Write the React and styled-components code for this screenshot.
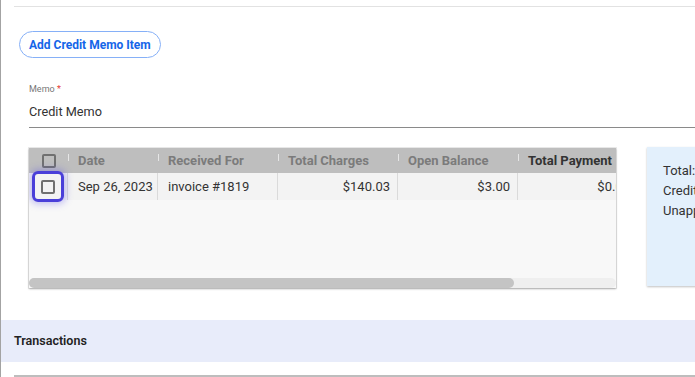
import React from "react";
import styled, { createGlobalStyle } from "styled-components";

const GlobalStyle = createGlobalStyle`
  body {
    margin: 0;
    background: #fff;
    font-family: Roboto, "Liberation Sans", sans-serif;
  }
`;

const columns = [
  { key: "date", label: "Date", width: 90 },
  { key: "receivedFor", label: "Received For", width: 120 },
  { key: "totalCharges", label: "Total Charges", width: 120, align: "right" },
  { key: "openBalance", label: "Open Balance", width: 120, align: "right" },
  { key: "totalPayment", label: "Total Payment", width: 120, align: "right", active: true },
];

const rows = [
  {
    id: 1,
    date: "Sep 26, 2023",
    receivedFor: "invoice #1819",
    totalCharges: "$140.03",
    openBalance: "$3.00",
    totalPayment: "$0.00",
  },
];

// visible part of the grid vs. full content width
const VIEW_WIDTH = 587;
const CONTENT_WIDTH = 711;

function App() {
  const thumbWidth = Math.round((VIEW_WIDTH / CONTENT_WIDTH) * VIEW_WIDTH);

  return (
    <>
      <GlobalStyle />
      <Page>
        <TopRule />
        <Toolbar>
          <OutlineButton>Add Credit Memo Item</OutlineButton>
        </Toolbar>

        <MemoField>
          <FieldLabel>
            Memo <Required>*</Required>
          </FieldLabel>
          <FieldValue>Credit Memo</FieldValue>
        </MemoField>

        <ContentRow>
          <Grid>
            <Viewport>
              <Inner>
                <HeaderRow>
                  <CheckCell>
                    <Checkbox />
                  </CheckCell>
                  {columns.map((col) => (
                    <HeadCell key={col.key} $w={col.width} $active={col.active}>
                      {col.label}
                    </HeadCell>
                  ))}
                  <Filler />
                </HeaderRow>
                {rows.map((row) => (
                  <DataRow key={row.id}>
                    <CheckCell $bordered>
                      <FocusRing>
                        <Checkbox />
                      </FocusRing>
                    </CheckCell>
                    {columns.map((col) => (
                      <Cell key={col.key} $w={col.width} $align={col.align}>
                        {row[col.key]}
                      </Cell>
                    ))}
                    <Filler />
                  </DataRow>
                ))}
              </Inner>
            </Viewport>
            <ScrollTrack>
              <ScrollThumb style={{ width: thumbWidth }} />
            </ScrollTrack>
          </Grid>

          <Summary>
            <SummaryLine>Total:</SummaryLine>
            <SummaryLine>Credit</SummaryLine>
            <SummaryLine>Unapplied</SummaryLine>
          </Summary>
        </ContentRow>

        <SectionBand>Transactions</SectionBand>
        <BottomRule />
      </Page>
    </>
  );
}

export default App;

const Page = styled.div`
  width: 695px;
  height: 377px;
  box-sizing: border-box;
  border-left: 1px solid #a3a3a3;
  overflow: hidden;
`;

const TopRule = styled.div`
  height: 1px;
  margin: 6px 0 0 13px;
  background: #e2e2e2;
`;

const Toolbar = styled.div`
  display: flex;
  padding: 24px 0 0 18px;
`;

const OutlineButton = styled.button`
  height: 27px;
  padding: 0 9px;
  border: 1px solid #86b0f7;
  border-radius: 14px;
  background: #fff;
  color: #1565e8;
  font-family: Roboto, "Liberation Sans", sans-serif;
  font-size: 12px;
  font-weight: 700;
  cursor: pointer;
`;

const MemoField = styled.div`
  margin: 26px 0 0 28px;
  border-bottom: 1px solid #8a8a8a;
`;

const FieldLabel = styled.div`
  height: 12px;
  font-size: 9px;
  line-height: 11px;
  color: #777;
`;

const Required = styled.span`
  color: #e53935;
`;

const FieldValue = styled.div`
  height: 31px;
  font-size: 12.7px;
  line-height: 32px;
  color: #333;
`;

const ContentRow = styled.div`
  display: flex;
  gap: 31px;
  margin-top: 20px;
  padding-left: 28px;
`;

const Grid = styled.div`
  flex: 0 0 ${VIEW_WIDTH}px;
  height: 140px;
  display: flex;
  flex-direction: column;
  background: #f8f8f8;
  box-shadow: 0 1px 2px rgba(0, 0, 0, 0.3), 0 0 0 1px #ececec;
  overflow: hidden;
`;

const Viewport = styled.div`
  flex: 1;
  overflow: hidden;
`;

const Inner = styled.div`
  width: ${CONTENT_WIDTH}px;
`;

const ScrollTrack = styled.div`
  flex: 0 0 10px;
  display: flex;
  background: #efefef;
  border-radius: 5px;
`;

const ScrollThumb = styled.div`
  height: 100%;
  background: #c4c4c4;
  border-radius: 5px;
`;

const HeaderRow = styled.div`
  display: flex;
  height: 25px;
  background: #bebebe;
`;

const DataRow = styled.div`
  display: flex;
  height: 27px;
  background: #f3f3f3;
`;

const CheckCell = styled.div`
  flex: 0 0 39px;
  display: flex;
  align-items: center;
  justify-content: center;
  box-sizing: border-box;
  border-right: ${(p) => (p.$bordered ? "1px solid #dadada" : "none")};
`;

const Checkbox = styled.span`
  display: block;
  width: 10px;
  height: 10px;
  border: 2px solid #707070;
  border-radius: 2px;
  background: transparent;
`;

const FocusRing = styled.span`
  display: flex;
  align-items: center;
  justify-content: center;
  width: 26px;
  height: 25px;
  border: 3px solid #4a3fd9;
  border-radius: 6px;
  box-shadow: 0 0 7px 2px rgba(90, 80, 230, 0.35);
`;

const HeadCell = styled.div`
  position: relative;
  flex: 0 0 ${(p) => p.$w}px;
  box-sizing: border-box;
  padding: 0 10px;
  font-size: 13px;
  font-weight: 700;
  line-height: 25px;
  color: ${(p) => (p.$active ? "#333" : "#7b7b7b")};
  white-space: nowrap;
  overflow: hidden;

  &::before {
    content: "";
    position: absolute;
    left: 0;
    top: 6px;
    width: 1px;
    height: 7px;
    background: #e6e6e6;
  }
`;

const Cell = styled.div`
  flex: 0 0 ${(p) => p.$w}px;
  box-sizing: border-box;
  padding: 0 ${(p) => (p.$align === "right" ? "7px" : "10px")};
  border-right: 1px solid #dadada;
  font-size: 13px;
  line-height: 27px;
  color: #333;
  text-align: ${(p) => p.$align || "left"};
  white-space: nowrap;
  overflow: hidden;
`;

const Filler = styled.div`
  flex: 1;
`;

const Summary = styled.div`
  flex: 0 0 200px;
  height: 139px;
  box-sizing: border-box;
  margin-top: -1px;
  padding: 14px 16px;
  background: #e3f0fc;
  box-shadow: 0 1px 2px rgba(0, 0, 0, 0.25);
`;

const SummaryLine = styled.div`
  font-size: 13px;
  line-height: 20px;
  color: #333;
  white-space: nowrap;
`;

const SectionBand = styled.div`
  height: 42px;
  margin: 32px 0 0 -1px;
  padding-left: 14px;
  background: #e8ecfa;
  font-size: 12.5px;
  font-weight: 600;
  line-height: 42px;
  color: #222;
`;

const BottomRule = styled.div`
  height: 2px;
  margin: 13px 0 0 13px;
  background: #bdbdbd;
`;
